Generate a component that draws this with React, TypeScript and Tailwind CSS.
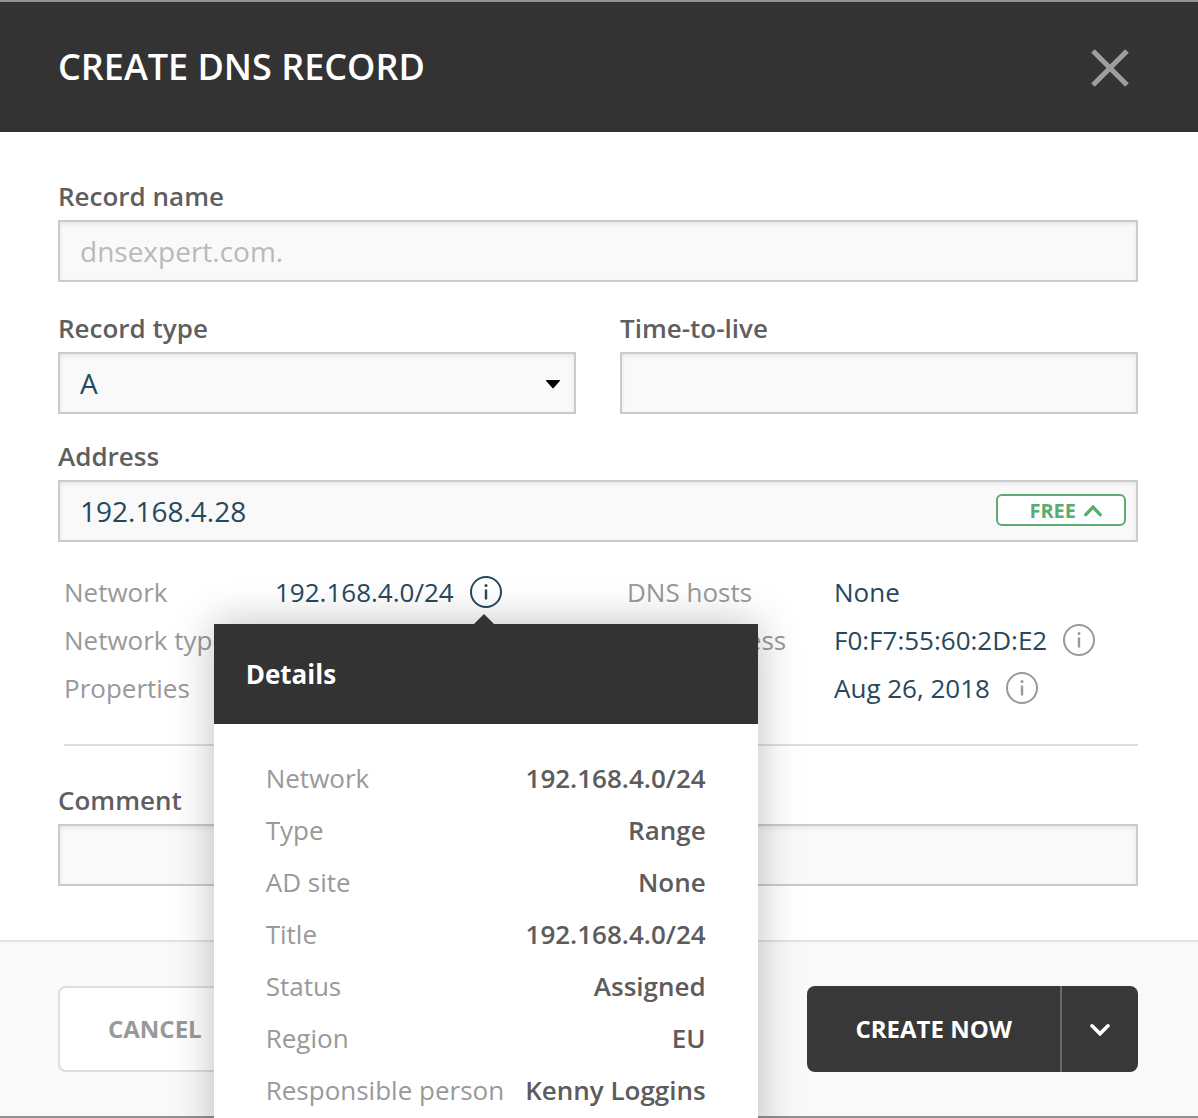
import { useState, type ReactNode } from "react";

const fieldClass =
  "block h-[62px] w-full appearance-none rounded-none border-2 border-[#cbcbcb] bg-[#f9f9f9] px-5 text-[28px] leading-9 text-[#27485c] shadow-[inset_0_2px_4px_rgba(0,0,0,0.08)] outline-none placeholder:text-[#b9b9b9]";

function Field({ id, label, children }: { id: string; label: string; children: ReactNode }) {
  return (
    <div>
      <label htmlFor={id} className="mb-1.5 block text-[26px] leading-9 font-semibold text-[#5f5f5f]">
        {label}
      </label>
      <div className="relative">{children}</div>
    </div>
  );
}

function InfoIcon() {
  return (
    <svg viewBox="0 0 32 32" className="size-8" fill="none" stroke="currentColor" aria-hidden="true">
      <circle cx="16" cy="16" r="15" strokeWidth="2" />
      <circle cx="16" cy="9.5" r="1.5" fill="currentColor" stroke="none" />
      <path d="M16 14.5V22.5" strokeWidth="2.4" strokeLinecap="round" />
    </svg>
  );
}

function InfoButton({ label, active = false }: { label: string; active?: boolean }) {
  return (
    <button
      type="button"
      aria-label={label}
      className={active ? "block size-8 rounded-full text-[#27485c]" : "block size-8 rounded-full text-[#999999]"}
    >
      <InfoIcon />
    </button>
  );
}

const networkDetails = [
  ["Network", "192.168.4.0/24"],
  ["Type", "Range"],
  ["AD site", "None"],
  ["Title", "192.168.4.0/24"],
  ["Status", "Assigned"],
  ["Region", "EU"],
  ["Responsible person", "Kenny Loggins"],
];

function DetailsPopover() {
  return (
    <div
      role="dialog"
      aria-label="Details"
      className="absolute top-full left-1/2 z-10 mt-4 w-[544px] -translate-x-1/2 bg-white shadow-[0_0_40px_rgba(0,0,0,0.25)]"
    >
      <svg viewBox="0 0 20 10" className="absolute bottom-full left-[260px] h-2.5 w-5" aria-hidden="true">
        <path d="M0 10L10 0L20 10Z" fill="#333333" />
      </svg>
      <h2 className="flex h-[100px] items-center bg-[#333333] px-8 text-[26px] leading-9 font-bold text-white">
        Details
      </h2>
      <dl className="px-[52px] pt-7 pb-10">
        {networkDetails.map(([name, value]) => (
          <div key={name} className="flex h-[52px] items-center justify-between whitespace-nowrap">
            <dt className="text-[#999999]">{name}</dt>
            <dd className="font-semibold text-[#5c5c5c]">{value}</dd>
          </div>
        ))}
      </dl>
    </div>
  );
}

export default function App() {
  const [address, setAddress] = useState("192.168.4.28");

  return (
    <main className="flex min-h-screen flex-col overflow-hidden border-t-2 border-[#929292] bg-white font-['Open_Sans',sans-serif] text-[26px] leading-9">
      <header className="flex h-[130px] items-center justify-between bg-[#333333] pr-[60px] pl-[58px]">
        <h1 className="text-[36px] leading-[48px] font-semibold text-white">CREATE DNS RECORD</h1>
        <button type="button" aria-label="Close" className="flex size-14 items-center justify-center text-[#9d9d9d]">
          <svg viewBox="0 0 40 40" className="size-10" fill="none" stroke="currentColor" strokeWidth="5.2" aria-hidden="true">
            <path d="M3 4L37 38M37 4L3 38" />
          </svg>
        </button>
      </header>

      <form className="grow pt-[46px] pr-[60px] pb-[54px] pl-[58px]">
        <Field id="name" label="Record name">
          <input id="name" type="text" placeholder="dnsexpert.com." className={fieldClass} />
        </Field>

        <div className="mt-7 grid grid-cols-2 gap-11">
          <Field id="type" label="Record type">
            <select id="type" defaultValue="A" className={fieldClass}>
              <option>A</option>
            </select>
            <svg
              viewBox="0 0 16 10"
              className="pointer-events-none absolute top-[27px] right-[15px] h-2.5 w-4"
              aria-hidden="true"
            >
              <path d="M1.4 1H14.6Q15.4 1.2 14.8 2L8.6 9Q8 9.8 7.4 9L1.2 2Q.6 1.2 1.4 1Z" fill="#000000" />
            </svg>
          </Field>
          <Field id="ttl" label="Time-to-live">
            <input id="ttl" type="text" className={fieldClass} />
          </Field>
        </div>

        <div className="mt-6">
          <Field id="address" label="Address">
            <input
              id="address"
              type="text"
              value={address}
              onChange={(event) => setAddress(event.target.value)}
              className={fieldClass}
            />
            <button
              type="button"
              className="absolute top-3.5 right-3 flex h-8 w-[130px] items-center justify-end gap-2 rounded-md border-2 border-[#5aad6e] bg-white pt-px pr-[22px] text-[20px] leading-7 font-bold text-[#5aad6e]"
            >
              FREE
              <svg viewBox="0 0 18 12" className="h-3 w-[18px]" fill="none" stroke="currentColor" strokeWidth="3.4" aria-hidden="true">
                <path d="M1.8 9.7L9 2.1L16.2 9.7" strokeLinecap="round" />
              </svg>
            </button>
          </Field>
        </div>

        <dl className="mt-[26px] ml-1.5 grid auto-rows-[48px] grid-cols-[211fr_352fr_207fr_304fr] items-center border-b-2 border-[#dedede] pb-8 whitespace-nowrap">
          <dt className="text-[#999999]">Network</dt>
          <dd className="flex items-center gap-4 text-[#27485c]">
            192.168.4.0/24
            <div className="relative">
              <InfoButton label="Network details" active />
              <DetailsPopover />
            </div>
          </dd>
          <dt className="text-[#999999]">DNS hosts</dt>
          <dd className="text-[#27485c]">None</dd>

          <dt className="text-[#999999]">Network type</dt>
          <dd />
          <dt className="text-[#999999]">MAC address</dt>
          <dd className="flex items-center gap-4 text-[#27485c]">
            F0:F7:55:60:2D:E2
            <InfoButton label="MAC address details" />
          </dd>

          <dt className="text-[#999999]">Properties</dt>
          <dd />
          <dt />
          <dd className="flex items-center gap-4 text-[#27485c]">
            Aug 26, 2018
            <InfoButton label="Date details" />
          </dd>
        </dl>

        <div className="mt-9">
          <Field id="comment" label="Comment">
            <input id="comment" type="text" className={fieldClass} />
          </Field>
        </div>
      </form>

      <footer className="flex items-center justify-between border-y-2 border-t-[#e2e2e2] border-b-[#929292] bg-[#f9f9f9] py-11 pr-[60px] pl-[58px] text-[24px] leading-8 font-bold">
        <button type="button" className="h-[86px] rounded-lg border-2 border-[#dedede] bg-white px-12 text-[#999999]">
          CANCEL
        </button>
        <div className="flex h-[86px] overflow-hidden rounded-lg bg-[#383838] text-white">
          <button type="button" className="px-12">
            CREATE NOW
          </button>
          <button
            type="button"
            aria-label="More create options"
            className="flex w-[78px] items-center justify-center border-l-2 border-[#6b6b6b]"
          >
            <svg viewBox="0 0 20 14" className="h-3.5 w-5" fill="none" stroke="currentColor" strokeWidth="3.6" aria-hidden="true">
              <path d="M2 3.8L10 11.8L18 3.8" strokeLinecap="round" />
            </svg>
          </button>
        </div>
      </footer>
    </main>
  );
}
